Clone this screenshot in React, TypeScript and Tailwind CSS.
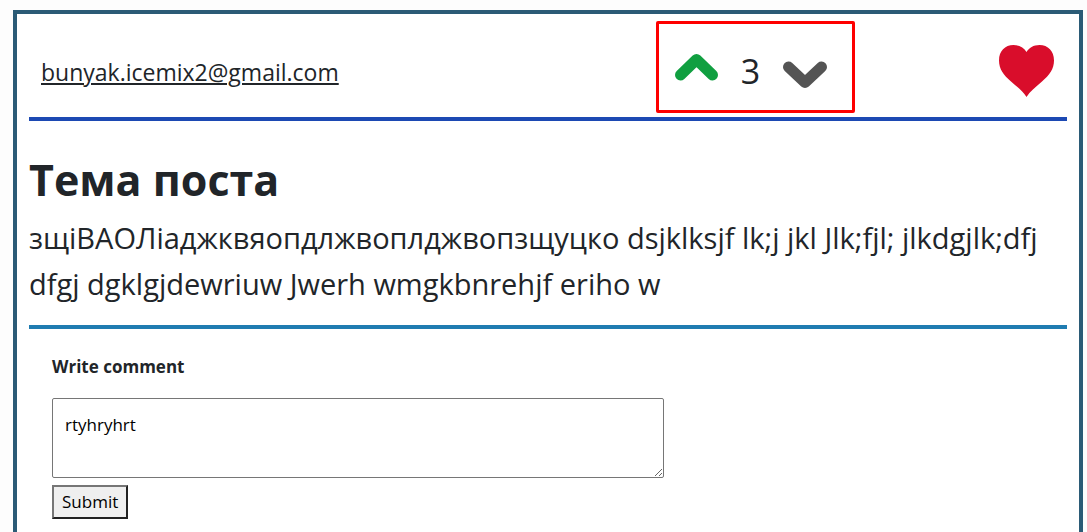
import { useState } from "react";

function Heart() {
  return (
    <svg viewBox="0 0 55 52" className="h-[52px] w-[55px]" fill="#d90d2b" aria-hidden="true">
      <path d="M27.500 52C24 46.500 19 42.500 12 36.500C4.500 30 0 24 0 15.500C0 6 6 0 14.500 0C20.500 0 25 2.800 27.500 7C30 2.800 34.500 0 40.500 0C49 0 55 6 55 15.500C55 24 50.500 30 43 36.500C36 42.500 31 46.500 27.500 52Z" />
    </svg>
  );
}

export default function App() {
  const [votes, setVotes] = useState(3);
  const [comment, setComment] = useState("rtyhryhrt");

  return (
    <div className="flex min-h-screen flex-col bg-[#fdfdfd] pt-[10px] pr-1 pl-[13px] font-['Open_Sans',sans-serif] text-[#212529]">
      <article className="grow border-x-4 border-t-4 border-[#2b5b76] bg-white px-3 pb-3">
        <header className="flex h-[107px] items-start justify-between border-b-4 border-[#1c49b3] pr-[13px] pl-3">
          <a href="mailto:bunyak.icemix2@gmail.com" className="mt-[42px] text-[23px] leading-8 underline decoration-2 underline-offset-2">
            bunyak.icemix2@gmail.com
          </a>
          <div className="flex">
            <div className="mt-[7px] mr-36 flex h-[92px] w-[199px] items-center rounded-xs border-3 border-[#fe0000] pr-[25px] pl-4">
              <button type="button" aria-label="Vote up" onClick={() => setVotes(votes + 1)}>
                <svg viewBox="0 0 43 28" className="h-7 w-[43px]" fill="none" stroke="#109f40" strokeWidth="11" strokeLinecap="round" strokeLinejoin="round">
                  <path d="M5.500 22L21.500 6.500L37.500 22" />
                </svg>
              </button>
              <output className="mt-2 grow text-center text-[34px] leading-[50px]">{votes}</output>
              <button type="button" aria-label="Vote down" className="mt-4" onClick={() => setVotes(votes - 1)}>
                <svg viewBox="0 0 44 28" className="h-7 w-11" fill="none" stroke="#545454" strokeWidth="11" strokeLinecap="round" strokeLinejoin="round">
                  <path d="M5.500 6L22 21.500L38.500 6" />
                </svg>
              </button>
            </div>
            <button type="button" aria-label="Like" className="mt-[31px] self-start">
              <Heart />
            </button>
          </div>
        </header>

        <section className="border-b-4 border-[#1f7cb1] pt-7 pb-[18px]">
          <h1 className="mb-1 text-[43px] leading-[62px] font-bold">Тема поста</h1>
          <p className="text-[29px] leading-[46px]">
            зщіВАОЛіаджквяопдлжвоплджвопзщуцко dsjklksjf lk;j jkl Jlk;fjl; jlkdgjlk;dfj dfgj dgklgjdewriuw Jwerh wmgkbnrehjf eriho w
          </p>
        </section>

        <form className="flex flex-col items-start pt-6 pl-[23px]" onSubmit={(e) => e.preventDefault()}>
          <label htmlFor="comment" className="text-[17px] leading-7 font-bold">
            Write comment
          </label>
          <textarea
            id="comment"
            value={comment}
            onChange={(e) => setComment(e.target.value)}
            className="mt-[17px] h-20 w-[612px] max-w-full resize rounded-xs border border-[#767676] bg-white px-3 py-3 text-[17px] leading-7 text-black"
          />
          <button type="submit" className="mt-[7px] border-2 border-t-[#767676] border-r-[#212121] border-b-[#212121] border-l-[#767676] bg-[#efefef] px-2 text-[17px] leading-[30px] text-black">
            Submit
          </button>
        </form>
      </article>
    </div>
  );
}
